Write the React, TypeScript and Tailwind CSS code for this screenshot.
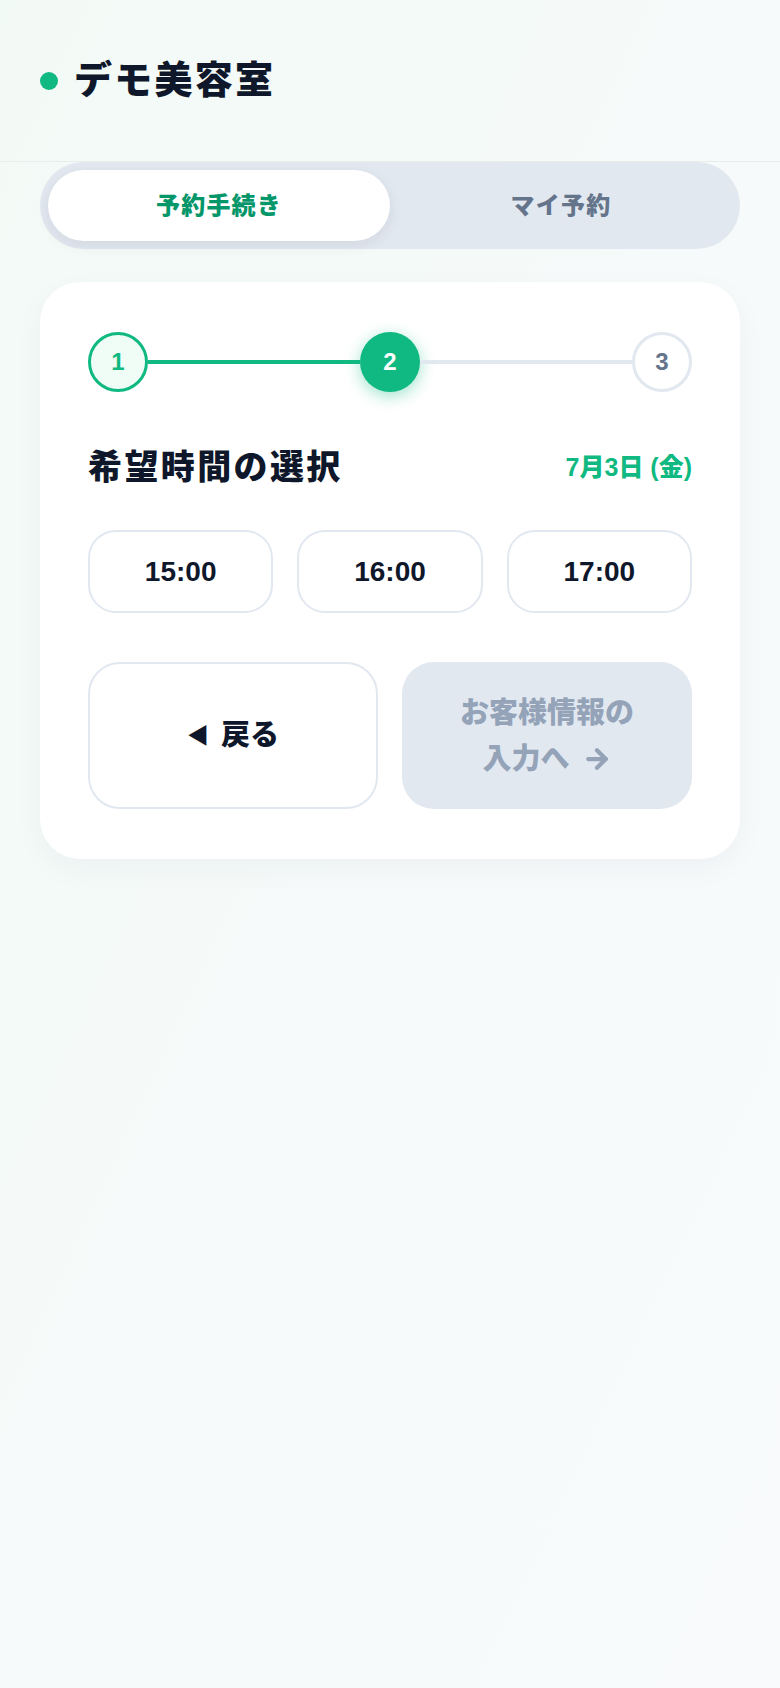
import React from "react";
import { ArrowRight } from "lucide-react";

const font = "font-['Liberation_Sans','Noto_Sans_CJK_JP',sans-serif]";

const slots = ["15:00", "16:00", "17:00"];

const Stepper = () => {
  return (
    <div className="flex items-center">
      <div className="flex h-[60px] w-[60px] shrink-0 items-center justify-center rounded-full border-[3px] border-[#10b981] bg-[#f0fdf7] text-[24px] font-bold text-[#10b981]">
        1
      </div>
      <div className="h-1 flex-1 bg-[#10b981]" />
      <div className="flex h-[60px] w-[60px] shrink-0 items-center justify-center rounded-full bg-[#10b981] text-[24px] font-bold text-white shadow-[0_4px_16px_rgba(16,185,129,0.4)]">
        2
      </div>
      <div className="h-1 flex-1 bg-[#e2e8f0]" />
      <div className="flex h-[60px] w-[60px] shrink-0 items-center justify-center rounded-full border-[3px] border-[#e2e8f0] bg-white text-[24px] font-bold text-[#64748b]">
        3
      </div>
    </div>
  );
};

export default function App() {
  return (
    <div
      className={`${font} min-h-[1688px] w-full bg-linear-to-br from-[#f2faf6] via-[#f6fafa] to-[#f8fafc]`}
    >
      {/* header */}
      <header className="flex h-[162px] items-center gap-4 border-b border-[#e8eeec] px-10">
        <span className="h-[18px] w-[18px] rounded-full bg-[#10b981]" />
        <h1 className="text-[38px] font-black tracking-[0.06em] text-[#0f172a]">
          デモ美容室
        </h1>
      </header>

      <main className="px-10">
        {/* tabs */}
        <div className="grid grid-cols-2 rounded-full bg-[#e2e8f0] p-2">
          <button className="h-[71px] rounded-full bg-white text-[24px] font-black tracking-[0.05em] text-[#059669] shadow-[0_4px_14px_rgba(15,23,42,0.08)]">
            予約手続き
          </button>
          <button className="h-[71px] rounded-full text-[24px] font-black tracking-[0.05em] text-[#64748b]">
            マイ予約
          </button>
        </div>

        {/* card */}
        <section className="mt-[33px] rounded-[40px] bg-white px-12 pt-[50px] pb-[50px] shadow-[0_10px_30px_rgba(15,23,42,0.04)]">
          <Stepper />

          <div className="mt-[50px] flex items-center justify-between">
            <h2 className="text-[34px] font-black tracking-[0.07em] text-[#0f172a]">
              希望時間の選択
            </h2>
            <span className="text-[25px] font-black text-[#10b981]">
              7月3日 (金)
            </span>
          </div>

          <div className="mt-[37px] grid grid-cols-3 gap-6">
            {slots.map((s) => (
              <button
                key={s}
                className="h-[83px] rounded-[28px] border-2 border-[#e2e8f0] bg-white text-[28px] font-bold text-[#0f172a]"
              >
                {s}
              </button>
            ))}
          </div>

          <div className="mt-[49px] grid grid-cols-2 gap-6">
            <button className="flex h-[147px] items-center justify-center gap-3 rounded-[32px] border-2 border-[#e2e8f0] bg-white text-[29px] font-black text-[#0f172a]">
              <span className="text-[22px]">◀</span>
              <span>戻る</span>
            </button>
            <button className="flex h-[147px] flex-col items-center justify-center rounded-[32px] bg-[#e2e8f0] px-4 text-[29px] font-black leading-[46px] text-[#94a3b8]">
              <span>お客様情報の</span>
              <span className="flex items-center gap-3">
                入力へ
                <ArrowRight size={30} strokeWidth={3.4} />
              </span>
            </button>
          </div>
        </section>
      </main>
    </div>
  );
}
